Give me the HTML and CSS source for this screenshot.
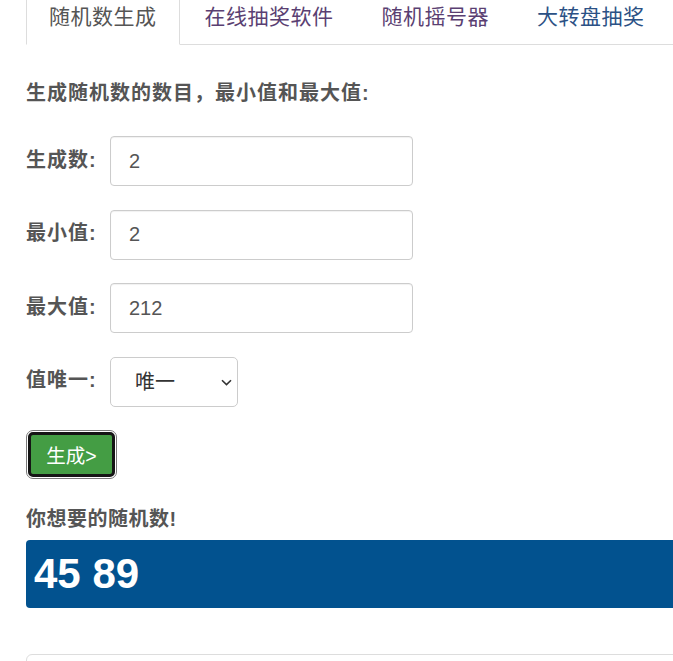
FILE: index.html
```html
<!DOCTYPE html>
<html lang="zh-CN">
<head>
<meta charset="utf-8">
<title>随机数生成</title>
<link rel="stylesheet" href="styles.css">
</head>
<body>
<div class="container">
  <ul class="tabs">
    <li class="tab active"><a href="#">随机数生成</a></li>
    <li class="tab visited"><a href="#">在线抽奖软件</a></li>
    <li class="tab visited"><a href="#">随机摇号器</a></li>
    <li class="tab link"><a href="#">大转盘抽奖</a></li>
  </ul>

  <h3 class="title">生成随机数的数目，最小值和最大值:</h3>

  <form class="form">
    <div class="row">
      <label class="label">生成数:</label>
      <input class="field" type="text" value="2">
    </div>
    <div class="row">
      <label class="label">最小值:</label>
      <input class="field" type="text" value="2">
    </div>
    <div class="row">
      <label class="label">最大值:</label>
      <input class="field" type="text" value="212">
    </div>
    <div class="row">
      <label class="label">值唯一:</label>
      <div class="select-wrap">
        <select class="select">
          <option>唯一</option>
          <option>可重复</option>
        </select>
        <svg class="chevron" width="11" height="7" viewBox="0 0 11 7"><path d="M1 1.2 L5.5 5.6 L10 1.2" fill="none" stroke="#333" stroke-width="1.6"/></svg>
      </div>
    </div>
    <div class="actions">
      <button class="btn" type="button">生成&gt;</button>
    </div>
  </form>

  <h3 class="result-title">你想要的随机数!</h3>
  <div class="result">45 89</div>

  <div class="panel"></div>
</div>
</body>
</html>
```

FILE: styles.css
```css
html, body {
  margin: 0;
  padding: 0;
  overflow: hidden;
  background: #fff;
}
body {
  font-family: "Liberation Sans", "Noto Sans CJK SC", sans-serif;
  color: #555;
}
.container {
  width: 760px;
  padding-left: 26px;
}
.tabs {
  list-style: none;
  margin: 0;
  padding: 0;
  display: flex;
  border-bottom: 1px solid #ddd;
}
.tab {
  margin-right: 2px;
  margin-bottom: -1px;
}
.tab a {
  display: block;
  padding: 0 22px 11px;
  line-height: 33px;
  font-size: 21px;
  letter-spacing: 0.5px;
  text-decoration: none;
  border: 1px solid transparent;
  border-top: 0;
}
.tab.active a {
  color: #555;
  border-color: #ddd;
  border-bottom-color: #fff;
  background: #fff;
}
.tab.visited a { color: #5a3f72; }
.tab.link a { color: #2b5185; }

.title {
  margin: 35px 0 0;
  font-size: 20px;
  line-height: 26px;
  letter-spacing: 1px;
  font-weight: bold;
  color: #555;
}
.form {
  margin-top: 30px;
  display: flex;
  flex-direction: column;
  gap: 23.5px;
}
.row {
  display: flex;
  align-items: center;
  height: 50px;
}
.label {
  width: 84px;
  font-size: 20px;
  letter-spacing: 1px;
  font-weight: bold;
  color: #555;
  margin-top: -6px;
}
.field {
  box-sizing: border-box;
  width: 303px;
  height: 50px;
  border: 1px solid #ccc;
  border-radius: 4px;
  padding: 0 18px;
  font-family: "Liberation Sans", "Noto Sans CJK SC", sans-serif;
  font-size: 20px;
  color: #555;
  box-shadow: inset 0 1px 1px rgba(0,0,0,0.06);
  outline: none;
}
.select-wrap {
  position: relative;
  width: 128px;
  height: 50px;
}
.select {
  appearance: none;
  -webkit-appearance: none;
  box-sizing: border-box;
  width: 128px;
  height: 50px;
  border: 1px solid #ccc;
  border-radius: 5px;
  background: #fff;
  padding: 0 0 0 24px;
  font-family: "Liberation Sans", "Noto Sans CJK SC", sans-serif;
  font-size: 20px;
  color: #333;
  outline: none;
}
.chevron {
  position: absolute;
  right: 6px;
  top: 22px;
}
.actions {
  margin-top: 1.5px;
  padding-left: 2px;
}
.btn {
  box-sizing: border-box;
  width: 87px;
  height: 45px;
  border: 3px solid #151515;
  border-radius: 5px;
  background: #449d44;
  color: #fff;
  font-family: "Liberation Sans", "Noto Sans CJK SC", sans-serif;
  font-size: 19.5px;
  padding: 0;
  outline: 1px solid #7a7a7a;
  outline-offset: 1px;
}
.result-title {
  margin: 29px 0 0;
  font-size: 20px;
  line-height: 26px;
  letter-spacing: 0.5px;
  font-weight: bold;
  color: #555;
}
.result {
  margin-top: 8px;
  height: 68px;
  line-height: 68px;
  background: #02528f;
  border-radius: 4px;
  color: #fff;
  font-family: "Liberation Sans", Arial, sans-serif;
  font-size: 42px;
  font-weight: bold;
  padding-left: 8px;
}
.panel {
  margin-top: 46px;
  height: 60px;
  border: 1px solid #ddd;
  border-radius: 6px;
}
```
